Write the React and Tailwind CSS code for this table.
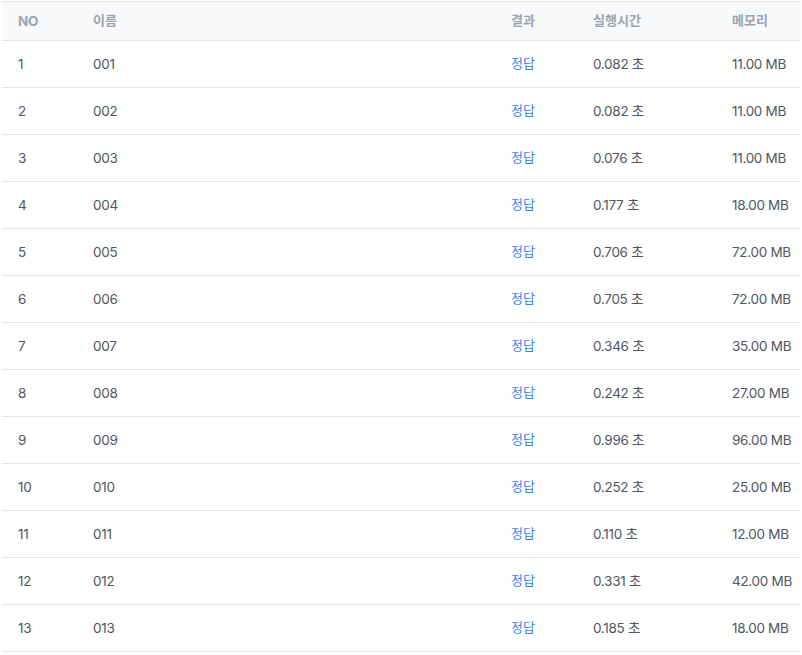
import React from 'react';

const rows = [
  ['1', '001', '0.082 초', '11.00 MB'],
  ['2', '002', '0.082 초', '11.00 MB'],
  ['3', '003', '0.076 초', '11.00 MB'],
  ['4', '004', '0.177 초', '18.00 MB'],
  ['5', '005', '0.706 초', '72.00 MB'],
  ['6', '006', '0.705 초', '72.00 MB'],
  ['7', '007', '0.346 초', '35.00 MB'],
  ['8', '008', '0.242 초', '27.00 MB'],
  ['9', '009', '0.996 초', '96.00 MB'],
  ['10', '010', '0.252 초', '25.00 MB'],
  ['11', '011', '0.110 초', '12.00 MB'],
  ['12', '012', '0.331 초', '42.00 MB'],
  ['13', '013', '0.185 초', '18.00 MB'],
];

const App = () => {
  return (
    <div
      className="bg-white w-[802px] h-[655px] pl-[2px] pt-[1px]"
      style={{ fontFamily: 'Inter, "Noto Sans CJK KR", sans-serif' }}
    >
      <table className="table-fixed w-[799px] border-collapse text-[13.5px] text-left">
        <colgroup>
          <col className="w-[75px]" />
          <col className="w-[418px]" />
          <col className="w-[82px]" />
          <col className="w-[139px]" />
          <col className="w-[85px]" />
        </colgroup>
        {/* Header */}
        <thead>
          <tr className="bg-[#f8f9fb] border-t border-b border-[#e3e5e8] h-[39px]">
            <th className="pl-4 font-bold text-[#9ca3af] tracking-[-0.3px]">NO</th>
            <th className="pl-4 font-bold text-[#9ca3af] text-[13px]">이름</th>
            <th className="pl-4 font-bold text-[#9ca3af] text-[13px]">결과</th>
            <th className="pl-4 font-bold text-[#9ca3af] text-[13px]">실행시간</th>
            <th className="pl-4 font-bold text-[#9ca3af] text-[13px]">메모리</th>
          </tr>
        </thead>
        <tbody>
          {rows.map(([no, name, time, mem]) => (
            <tr key={no} className="border-b border-[#e3e5e8] h-[47px] text-[#51565e]">
              <td className="pl-4 tracking-[-0.3px]">{no}</td>
              <td className="pl-4 tracking-[-0.3px]">{name}</td>
              <td className="pl-4 text-[13px] text-[#3b82f6]">정답</td>
              <td className="pl-4 tracking-[-0.3px]">{time}</td>
              <td className="pl-4 tracking-[-0.3px]">{mem}</td>
            </tr>
          ))}
        </tbody>
      </table>
    </div>
  );
};

export default App;
